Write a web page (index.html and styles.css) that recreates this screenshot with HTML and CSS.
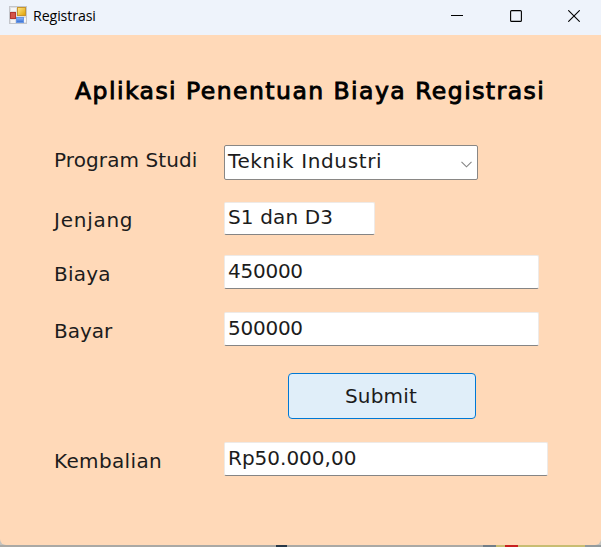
FILE: index.html
```html
<!DOCTYPE html>
<html lang="id">
<head>
<meta charset="utf-8">
<title>Registrasi</title>
<link rel="stylesheet" href="styles.css">
</head>
<body>
<div class="window">
  <header class="titlebar">
    <svg class="app-icon" width="18" height="18" viewBox="0 0 18 18">
      <defs>
        <linearGradient id="gold" x2="1" y2="1"><stop stop-color="#ffe88b"/><stop offset="1" stop-color="#e0a000"/></linearGradient>
        <linearGradient id="blue" x2="0" y2="1"><stop stop-color="#91b9fb"/><stop offset="1" stop-color="#326bd0"/></linearGradient>
      </defs>
      <rect x=".5" y=".5" width="17" height="17" fill="#dedfe2" stroke="#c4c6cb"/>
      <path d="M2 2h5v3H2zM2 14h4v3H2zM15 12h2v4h-2z" fill="#f5f5f6"/>
      <rect x="1.5" y="6.5" width="5" height="6" fill="#d45449" stroke="#b3352f"/>
      <rect x="8.5" y="1.5" width="8" height="8" fill="url(#gold)" stroke="#c8952c"/>
      <rect x="7.5" y="11.5" width="7" height="5" fill="url(#blue)" stroke="#6796e4"/>
    </svg>
    <span class="caption">Registrasi</span>
    <div class="controls">
      <svg width="12" height="12" viewBox="0 0 12 12"><path d="M0 5.5h12" stroke="#000"/></svg>
      <svg width="12" height="12" viewBox="0 0 12 12"><rect x=".6" y=".6" width="10.8" height="10.8" rx="1" fill="none" stroke="#000" stroke-width="1.1"/></svg>
      <svg width="12" height="12" viewBox="0 0 12 12"><path d="M.3.3l11.4 11.4M11.7.3L.3 11.7" stroke="#000" stroke-width="1.1"/></svg>
    </div>
  </header>
  <main class="form">
    <h1><span class="heading">Aplikasi Penentuan Biaya Registrasi</span></h1>
    <div class="row program">
      <span class="label">Program Studi</span>
      <div class="select"><span>Teknik Industri</span>
        <svg width="11" height="7" viewBox="0 0 11 7"><path d="M.5.8l5 5 5-5" fill="none" stroke="#858585" stroke-width="1.1"/></svg>
      </div>
    </div>
    <div class="row level"><span class="label">Jenjang</span><div class="input short"><span>S1 dan D3</span></div></div>
    <div class="row cost"><span class="label">Biaya</span><div class="input number"><span>450000</span></div></div>
    <div class="row pay"><span class="label">Bayar</span><div class="input number"><span>500000</span></div></div>
    <button class="submit">Submit</button>
    <div class="row change"><span class="label">Kembalian</span><div class="input wide"><span>Rp50.000,00</span></div></div>
  </main>
</div>
<div class="backdrop"></div>
</body>
</html>
```
FILE: styles.css
```css
* { box-sizing: border-box; }
body {
  margin: 0;
  height: 547px;
  overflow: hidden;
  background: #c5c3be;
  font-family: "DejaVu Sans", sans-serif;
  color: #1c1c1c;
}
.window {
  height: 545px;
  border-radius: 0 0 6px 6px;
  overflow: hidden;
  background: #ffd9b8;
}
.titlebar {
  display: flex;
  align-items: flex-start;
  height: 35px;
  padding-left: 9px;
  background: #eef3fb;
  color: #000;
}
.app-icon { margin-top: 6px; }
.caption {
  margin: 6px 0 0 6px;
  font: 14.2px/20px "Open Sans", sans-serif;
  letter-spacing: -0.1px;
}
.controls {
  display: flex;
  gap: 47px;
  margin: 10px 21px 0 auto;
}
.controls svg:last-child { margin-left: -1px; }
.form { display: flex; flex-direction: column; }
h1 {
  margin: 39px 0 0 75px;
  height: 34px;
  font-size: 23.5px;
  line-height: 34px;
  font-weight: 400;
  letter-spacing: 1.46px;
  color: #000;
  white-space: nowrap;
  -webkit-text-stroke: 0.9px #000;
}
.row {
  display: grid;
  grid-template-columns: 170px auto;
  justify-content: start;
  align-items: start;
  height: 34px;
  padding-left: 54px;
  font-size: 20px;
  line-height: 30px;
  white-space: nowrap;
}
.program { margin-top: 37px; height: 35px; }
.level { margin-top: 22px; }
.cost { margin-top: 19px; }
.pay { margin-top: 23px; }
.change { margin-top: 23px; }
.label { padding-top: 4px; }
.program .label { padding-top: 0; letter-spacing: 0.1px; }
.level .label { padding-top: 3px; letter-spacing: 0.75px; }
.cost .label { letter-spacing: 0.2px; }
.change .label { letter-spacing: 0.35px; }
.input {
  width: 315px;
  height: 34px;
  padding-left: 3px;
  border: 1px solid #eeeae7;
  border-bottom: 1px solid #858585;
  border-radius: 2px;
  background: #fff;
}
.number { letter-spacing: -0.25px; }
.short { width: 151px; height: 33px; line-height: 29px; letter-spacing: 0.15px; }
.wide { width: 324px; }
.select {
  display: flex;
  justify-content: space-between;
  width: 254px;
  height: 35px;
  padding: 0 5px 0 3px;
  border: 1px solid #898785;
  border-radius: 2px;
  background: #fff;
  letter-spacing: 0.62px;
}
.select svg { margin-top: 15px; }
.submit {
  width: 188px;
  height: 46px;
  margin: 27px 0 0 288px;
  padding: 0 2px 0 0;
  border: 1px solid #0078d4;
  border-radius: 4px;
  background: #e0eef9;
  color: #1c1c1c;
  font: 20px/30px "DejaVu Sans", sans-serif;
  letter-spacing: 0.2px;
}
.backdrop {
  height: 2px;
  background: linear-gradient(90deg, #aaa9a5 0 276px, #283848 276px 287px, #aaa9a5 287px 483px, #727e88 483px 496px, #c8bd72 496px 505px, #c82020 505px 518px, #c8bd72 518px 585px, #929a9d 585px);
}
```
